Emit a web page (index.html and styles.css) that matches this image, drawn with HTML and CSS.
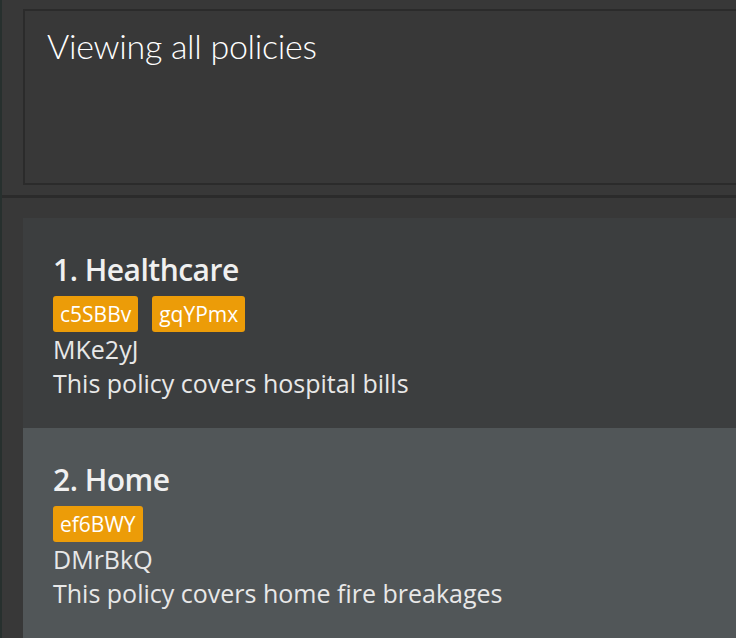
FILE: index.html
```html
<!DOCTYPE html>
<html lang="en">
<head>
<meta charset="utf-8">
<title>Policies</title>
<link rel="stylesheet" href="styles.css">
</head>
<body>
<div class="app">
  <div class="edge"></div>
  <div class="main">
    <section class="result-pane">
      <div class="result-box">Viewing all policies</div>
    </section>
    <div class="divider"></div>
    <section class="list-pane">
      <ul class="policy-list">
        <li class="policy-card even">
          <div class="policy-title">1. Healthcare</div>
          <div class="tags">
            <span class="tag">c5SBBv</span>
            <span class="tag">gqYPmx</span>
          </div>
          <div class="policy-line">MKe2yJ</div>
          <div class="policy-line">This policy covers hospital bills</div>
        </li>
        <li class="policy-card odd">
          <div class="policy-title">2. Home</div>
          <div class="tags">
            <span class="tag">ef6BWY</span>
          </div>
          <div class="policy-line">DMrBkQ</div>
          <div class="policy-line">This policy covers home fire breakages</div>
        </li>
      </ul>
    </section>
  </div>
</div>
</body>
</html>
```
FILE: styles.css
```css
html, body {
  margin: 0;
  padding: 0;
  height: 100%;
  background: #383838;
  overflow: hidden;
}

.app {
  display: flex;
  height: 638px;
  overflow: hidden;
  font-family: "Open Sans", "Noto Sans", sans-serif;
}

.edge {
  width: 2px;
  flex: none;
  background: #27302e;
}

.main {
  flex: 1;
  display: flex;
  flex-direction: column;
  min-width: 0;
}

.result-pane {
  padding: 9px 0 10px 21px;
}

.result-box {
  height: 176px;
  box-sizing: border-box;
  border: 2px solid #2b2b2b;
  border-right: none;
  margin-right: -10px;
  padding: 12px 0 0 22px;
  color: #ffffff;
  font-family: "Lato", "Open Sans", sans-serif;
  font-size: 34px;
  font-weight: 300;
  line-height: 46px;
  letter-spacing: -0.3px;
  white-space: nowrap;
}

.divider {
  height: 4px;
  background: #2b2b2b;
}

.list-pane {
  padding: 20px 0 0 21px;
  flex: 1;
}

.policy-list {
  list-style: none;
  margin: 0;
  padding: 0;
}

.policy-card {
  height: 210px;
  box-sizing: border-box;
  padding: 34px 0 0 30px;
  color: #eeeeee;
}

.policy-card.even {
  background: #3c3e3f;
}

.policy-card.odd {
  background: #515658;
}

.policy-title {
  font-size: 30px;
  font-weight: 600;
  line-height: 36px;
  letter-spacing: -0.5px;
  color: #f0f0f0;
}

.tags {
  display: flex;
  gap: 14px;
  margin-top: 8px;
}

.tag {
  background: #ec9c08;
  color: #ffffff;
  font-size: 21px;
  line-height: 36px;
  height: 36px;
  padding: 0 7px;
  border-radius: 3px;
}

.policy-line {
  font-size: 25px;
  line-height: 34px;
  color: #e8e8e8;
  white-space: nowrap;
}
```
